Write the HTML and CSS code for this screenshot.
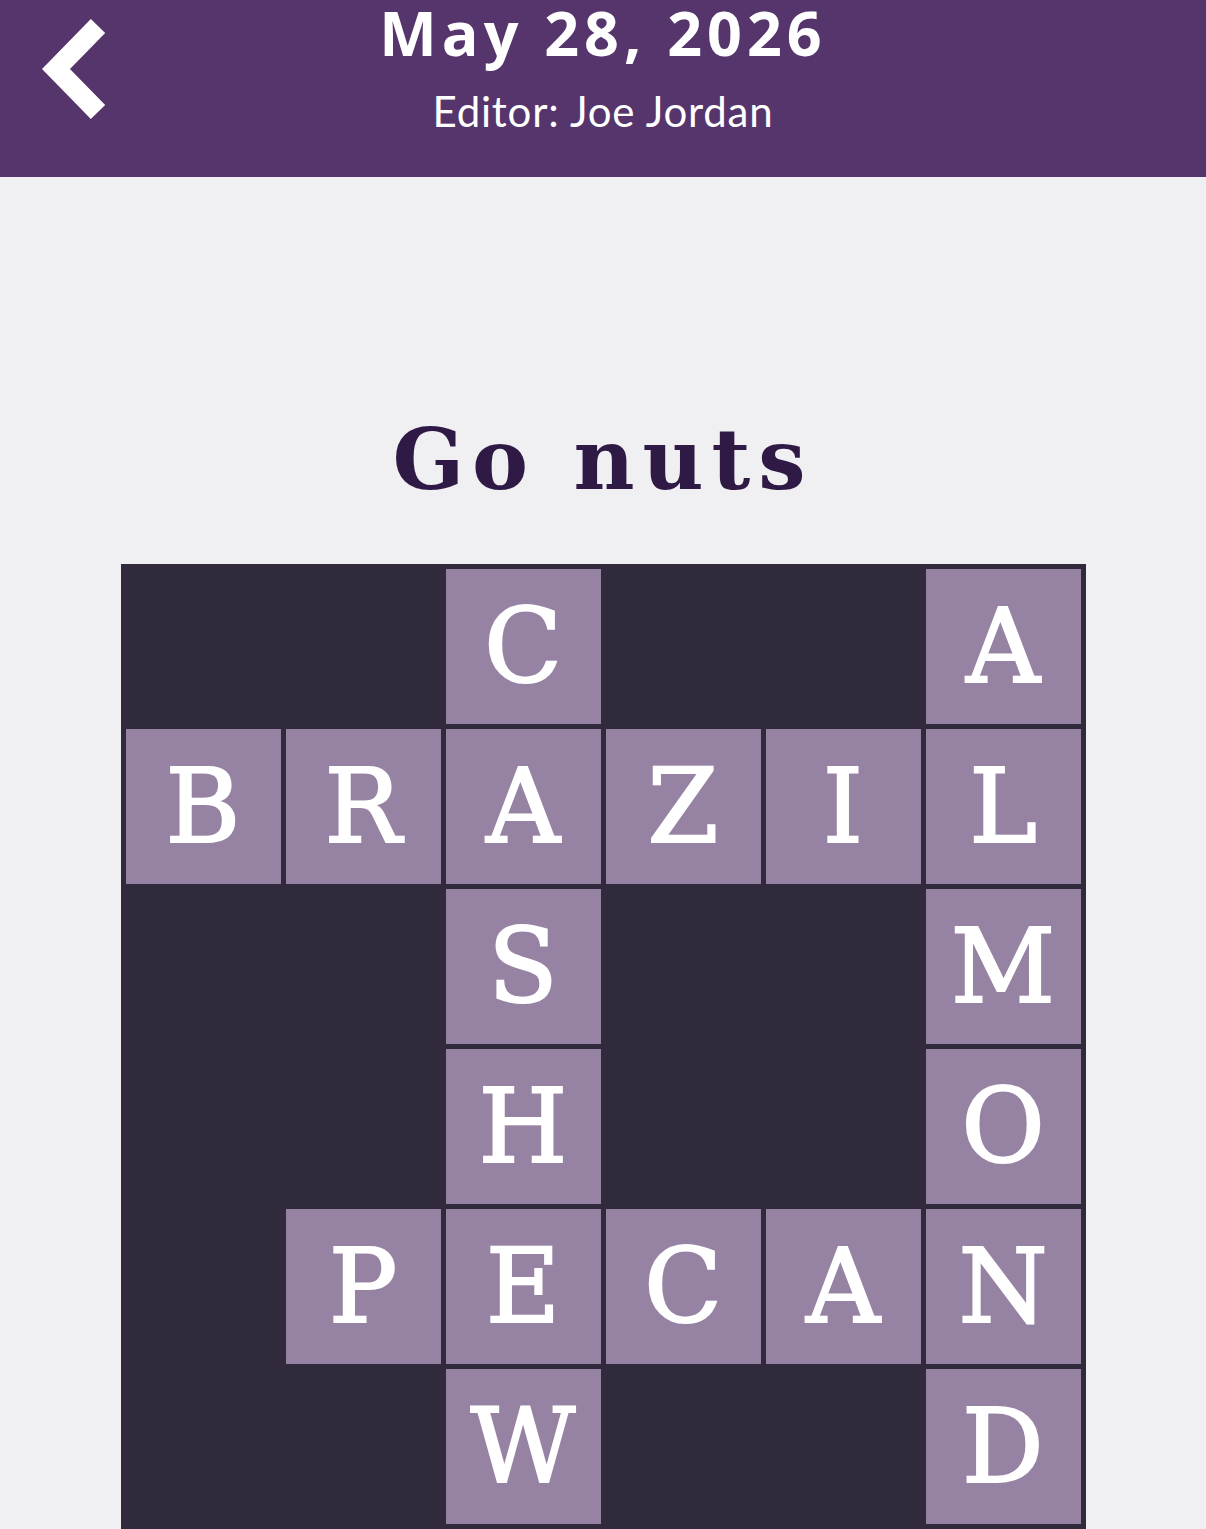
FILE: index.html
```html
<!doctype html>
<html>

<head>
  <title>Go nuts</title>
  <meta name="viewport" content="width=device-width, initial-scale=1.0">
  <link rel="stylesheet" href="styles.css">
</head>

<body>
  <!-- Top bar -->
  <header class="top-bar">
    <a class="back-link" href="#">
      <svg width="80" height="110" viewBox="0 0 80 110">
        <polyline points="68,11 26,54 68,97" fill="none" stroke="#fff" stroke-width="20" stroke-linecap="butt" stroke-linejoin="miter" />
      </svg>
    </a>
    <div class="puzzle-info">
      <div class="puzzle-date">May 28, 2026</div>
      <div class="puzzle-editor">Editor: Joe Jordan</div>
    </div>
    <div></div>
  </header>

  <main class="puzzle">
    <h1 class="puzzle-title">Go nuts</h1>

    <!-- Board -->
    <div class="board">
      <div class="cell"></div>
      <div class="cell"></div>
      <div class="cell filled">C</div>
      <div class="cell"></div>
      <div class="cell"></div>
      <div class="cell filled">A</div>

      <div class="cell filled">B</div>
      <div class="cell filled">R</div>
      <div class="cell filled">A</div>
      <div class="cell filled">Z</div>
      <div class="cell filled">I</div>
      <div class="cell filled">L</div>

      <div class="cell"></div>
      <div class="cell"></div>
      <div class="cell filled">S</div>
      <div class="cell"></div>
      <div class="cell"></div>
      <div class="cell filled">M</div>

      <div class="cell"></div>
      <div class="cell"></div>
      <div class="cell filled">H</div>
      <div class="cell"></div>
      <div class="cell"></div>
      <div class="cell filled">O</div>

      <div class="cell"></div>
      <div class="cell filled">P</div>
      <div class="cell filled">E</div>
      <div class="cell filled">C</div>
      <div class="cell filled">A</div>
      <div class="cell filled">N</div>

      <div class="cell"></div>
      <div class="cell"></div>
      <div class="cell filled">W</div>
      <div class="cell"></div>
      <div class="cell"></div>
      <div class="cell filled">D</div>
    </div>
  </main>
</body>

</html>
```

FILE: styles.css
```css
body {
  background-color: #f0f0f3;
  font-family: Lato, "Open Sans", sans-serif;
  margin: 0;
  padding: 0;
}

.top-bar {
  display: grid;
  grid-template-columns: 1fr auto 1fr;
  align-items: start;
  height: 177px;
  background-color: #55356b;
  color: #ffffff;
  box-sizing: border-box;
}

.back-link {
  display: block;
  width: 80px;
  height: 110px;
  margin: 15px 0 0 30px;
}

.puzzle-info {
  text-align: center;
}

.puzzle-date {
  font-family: "Open Sans", sans-serif;
  font-size: 61px;
  line-height: 66px;
  font-weight: bold;
  letter-spacing: 5px;
}

.puzzle-editor {
  margin-top: 20px;
  font-size: 42px;
  line-height: 50px;
  letter-spacing: 0.8px;
}

.puzzle {
  display: flex;
  flex-direction: column;
  align-items: center;
}

.puzzle-title {
  margin: 233px 0 54px 0;
  font-family: "DejaVu Serif", serif;
  font-size: 84px;
  line-height: 100px;
  font-weight: bold;
  letter-spacing: 8px;
  color: #2f1a45;
}

.board {
  display: grid;
  grid-template-columns: repeat(6, 155px);
  grid-auto-rows: 155px;
  gap: 5px;
  padding: 5px;
  background-color: #31293c;
}

.cell {
  display: flex;
  align-items: center;
  justify-content: center;
  font-family: "DejaVu Serif", serif;
  font-size: 102px;
  line-height: 1;
  color: #ffffff;
  -webkit-text-stroke: 2px #ffffff;
}

.cell.filled {
  background-color: #9682a2;
}
```
